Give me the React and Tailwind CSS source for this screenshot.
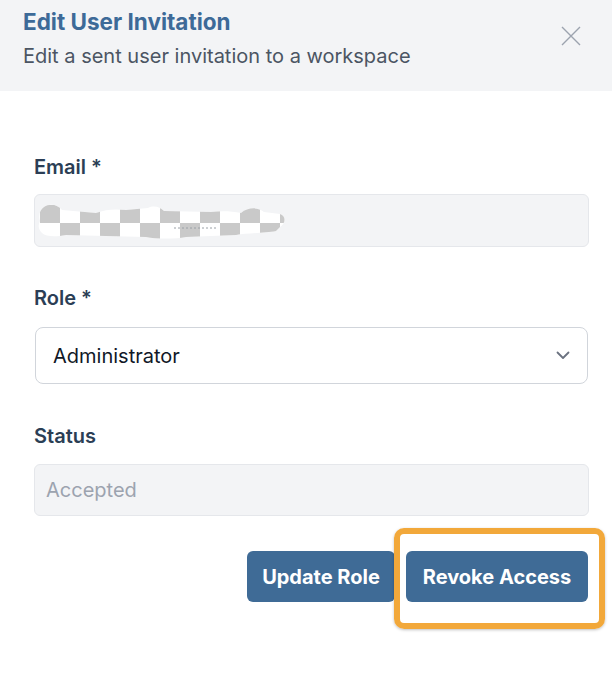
import React from "react";

function Redaction() {
  const squares = [];
  const size = 20;
  for (let r = 0; r < 2; r++) {
    for (let c = 0; c < 13; c++) {
      if ((r + c) % 2 === 0) {
        squares.push(
          <rect key={`${r}-${c}`} x={c * size} y={r * 18} width={size} height={18} fill="#c9c9c9" />
        );
      }
    }
  }
  return (
    <svg width="250" height="40" viewBox="0 0 250 40" className="block">
      <defs>
        <clipPath id="blob">
          <path d="M8 6 C14 2 22 4 26 9 L60 12 C70 8 80 8 90 9 L112 7 C118 4 124 6 128 10 L175 11 C185 10 195 10 205 12 C212 6 222 6 228 11 L244 13 C250 15 250 22 244 26 L240 30 C230 32 210 32 200 34 L150 36 C140 38 120 38 110 36 L30 34 C20 36 10 36 6 32 C2 28 2 24 4 20 C2 14 4 9 8 6 Z" />
        </clipPath>
      </defs>
      <g clipPath="url(#blob)">
        <rect x="0" y="0" width="250" height="40" fill="#ffffff" />
        <g transform="translate(4,4)">{squares}</g>
      </g>
      <line x1="138" y1="27" x2="180" y2="27" stroke="#9aa0a6" strokeWidth="1" strokeDasharray="2 2" />
    </svg>
  );
}

export default function App() {
  return (
    <div className="w-[612px] h-[698px] bg-white relative overflow-hidden" style={{ fontFamily: "Inter, 'Noto Sans', sans-serif" }}>
      <div className="h-[91px] bg-[#f3f4f6] flex items-start justify-between pl-[23px] pr-[30px] pt-[8px]">
        <div>
          <div className="text-[22.5px] leading-[28px] font-bold text-[#3d6a98]">Edit User Invitation</div>
          <div className="text-[20px] leading-[28px] text-[#4b5563] mt-[6px]">Edit a sent user invitation to a workspace</div>
        </div>
        <svg width="22" height="22" viewBox="0 0 22 22" className="mt-[17px]">
          <path d="M2 2 L20 20 M20 2 L2 20" stroke="#9ca3af" strokeWidth="1.4" />
        </svg>
      </div>

      <div className="pl-[34px] pr-[23px] pt-[62px] flex flex-col">
        <label className="text-[20px] leading-[28px] font-semibold text-[#2b3e55]">Email *</label>
        <div className="mt-[13px] h-[53px] w-[555px] rounded-[6px] bg-[#f3f4f6] border border-[#e5e7eb] flex items-center pl-[1px]">
          <Redaction />
        </div>

        <label className="mt-[37px] text-[20px] leading-[28px] font-semibold text-[#2b3e55]">Role *</label>
        <div className="mt-[15px] ml-[1px] h-[57px] w-[553px] rounded-[8px] bg-white border border-[#d1d5db] flex items-center justify-between pl-[17px] pr-[17px]">
          <span className="text-[20px] text-[#111827]">Administrator</span>
          <svg width="14" height="9" viewBox="0 0 14 9">
            <path d="M1.5 1.5 L7 7 L12.5 1.5" fill="none" stroke="#6b7280" strokeWidth="1.8" strokeLinecap="round" strokeLinejoin="round" />
          </svg>
        </div>

        <label className="mt-[38px] text-[20px] leading-[28px] font-semibold text-[#2b3e55]">Status</label>
        <div className="mt-[14px] h-[52px] w-[555px] rounded-[6px] bg-[#f3f4f6] border border-[#e5e7eb] flex items-center pl-[11px]">
          <span className="text-[20px] text-[#9ca3af]">Accepted</span>
        </div>

        <div className="mt-[35px] flex justify-end gap-[11px] pr-[1px]">
          <button className="h-[51px] w-[148px] rounded-[6px] bg-[#3f6b96] text-white text-[20px] font-bold">Update Role</button>
          <button className="h-[51px] w-[182px] rounded-[6px] bg-[#3f6b96] text-white text-[20px] font-bold">Revoke Access</button>
        </div>
      </div>

      <div className="absolute left-[394px] top-[528px] w-[211px] h-[101px] rounded-[10px] border-[6px] border-[#f2a83a] shadow-[0_1px_3px_rgba(0,0,0,0.25)]" />
    </div>
  );
}
